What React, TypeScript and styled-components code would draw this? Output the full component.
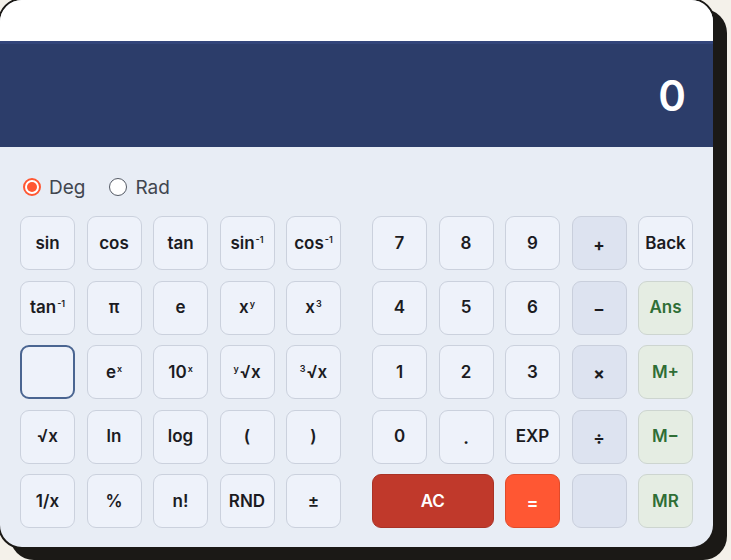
import React from 'react'
import styled, { createGlobalStyle } from 'styled-components'

const GlobalStyle = createGlobalStyle`
  html, body {
    margin: 0;
    padding: 0;
    background: #f4f1ea;
    overflow: hidden;
  }
  body {
    font-family: Inter, "Noto Sans", sans-serif;
    width: 731px;
    height: 560px;
  }
`

const Card = styled.div`
  box-sizing: border-box;
  width: 717px;
  height: 551px;
  margin: -2px 0 0 -2px;
  border: 2px solid #1b1916;
  border-radius: 24px;
  box-shadow: 12px 11px 0 #1b1916;
  overflow: hidden;
  display: flex;
  flex-direction: column;
  background: #e8edf5;
`

const TopStrip = styled.div`
  height: 41px;
  background: #ffffff;
  flex-shrink: 0;
`

const Display = styled.div`
  box-sizing: border-box;
  height: 106px;
  flex-shrink: 0;
  background: #2c3d6a;
  border-top: 3px solid #33457a;
  display: flex;
  align-items: center;
  justify-content: flex-end;
  padding: 0 27px 0 0;
  color: #ffffff;
  font-size: 42px;
  font-weight: 600;
`

const Body = styled.div`
  flex: 1;
  padding: 28px 20px 0 20px;
  display: flex;
  flex-direction: column;
`

const ModeRow = styled.div`
  display: flex;
  align-items: center;
  height: 24px;
  gap: 24px;
  margin: 0 0 17px 3px;
`

const ModeOption = styled.label`
  display: flex;
  align-items: center;
  gap: 8px;
  font-size: 19px;
  color: #41464f;
  font-weight: 400;
`

const RadioDot = styled.span<{ $checked?: boolean }>`
  box-sizing: border-box;
  width: 18px;
  height: 18px;
  border-radius: 50%;
  border: ${(p) => (p.$checked ? '2px solid #ff5733' : '1.5px solid #555b66')};
  background: #ffffff;
  display: flex;
  align-items: center;
  justify-content: center;
  &::after {
    content: '';
    width: 10px;
    height: 10px;
    border-radius: 50%;
    background: ${(p) => (p.$checked ? '#ff5733' : 'transparent')};
  }
`

const Keypad = styled.div`
  display: flex;
  gap: 31px;
`

const KeyGrid = styled.div`
  display: grid;
  grid-template-columns: repeat(5, 55px);
  grid-auto-rows: 54px;
  column-gap: 11.5px;
  row-gap: 10.5px;
`

type Tone = 'plain' | 'op' | 'mem' | 'clear' | 'equal' | 'focus'

const tones: Record<Tone, { bg: string; border: string; color: string }> = {
  plain: { bg: '#eef2fa', border: '#cbd1dd', color: '#1b1b1f' },
  op: { bg: '#dde3f0', border: '#c9cfdc', color: '#1b1b1f' },
  mem: { bg: '#e5ede3', border: '#cdd5d0', color: '#2f6e36' },
  clear: { bg: '#c0392b', border: '#a93226', color: '#ffffff' },
  equal: { bg: '#ff5733', border: '#e04a2a', color: '#ffffff' },
  focus: { bg: '#eef2fa', border: '#4a6591', color: '#1b1b1f' },
}

const Key = styled.button<{ $tone?: Tone; $span?: number }>`
  box-sizing: border-box;
  margin: 0;
  padding: 0;
  grid-column: span ${(p) => p.$span ?? 1};
  background: ${(p) => tones[p.$tone ?? 'plain'].bg};
  border: ${(p) => (p.$tone === 'focus' ? '2px' : '1.5px')} solid
    ${(p) => tones[p.$tone ?? 'plain'].border};
  border-radius: 9px;
  color: ${(p) => tones[p.$tone ?? 'plain'].color};
  font-family: Inter, "Noto Sans", sans-serif;
  font-size: 17px;
  font-weight: 600;
  display: flex;
  align-items: center;
  justify-content: center;
  line-height: 1;

  sup {
    font-size: 9px;
    margin-left: 1px;
    position: relative;
    top: -4px;
  }
`

const Pre = styled.sup`
  && {
    margin: 0 1px 0 0;
  }
`

const SmallOp = styled.span`
  font-size: 17px;
  font-weight: 700;
  padding-top: 4px;
`

const leftKeys: { label: React.ReactNode; tone?: Tone }[] = [
  { label: 'sin' },
  { label: 'cos' },
  { label: 'tan' },
  { label: <>sin<sup>-1</sup></> },
  { label: <>cos<sup>-1</sup></> },
  { label: <>tan<sup>-1</sup></> },
  { label: 'π' },
  { label: 'e' },
  { label: <>x<sup>y</sup></> },
  { label: <>x<sup>3</sup></> },
  { label: '', tone: 'focus' },
  { label: <>e<sup>x</sup></> },
  { label: <>10<sup>x</sup></> },
  { label: <><Pre>y</Pre>√x</> },
  { label: <><Pre>3</Pre>√x</> },
  { label: '√x' },
  { label: 'ln' },
  { label: 'log' },
  { label: '(' },
  { label: ')' },
  { label: '1/x' },
  { label: '%' },
  { label: 'n!' },
  { label: 'RND' },
  { label: '±' },
]

const rightKeys: { label: React.ReactNode; tone?: Tone; span?: number }[] = [
  { label: '7' },
  { label: '8' },
  { label: '9' },
  { label: <SmallOp>+</SmallOp>, tone: 'op' },
  { label: 'Back' },
  { label: '4' },
  { label: '5' },
  { label: '6' },
  { label: <SmallOp>–</SmallOp>, tone: 'op' },
  { label: 'Ans', tone: 'mem' },
  { label: '1' },
  { label: '2' },
  { label: '3' },
  { label: <SmallOp>×</SmallOp>, tone: 'op' },
  { label: 'M+', tone: 'mem' },
  { label: '0' },
  { label: <SmallOp>.</SmallOp> },
  { label: 'EXP' },
  { label: <SmallOp>÷</SmallOp>, tone: 'op' },
  { label: 'M−', tone: 'mem' },
  { label: 'AC', tone: 'clear', span: 2 },
  { label: <SmallOp>=</SmallOp>, tone: 'equal' },
  { label: '', tone: 'op' },
  { label: 'MR', tone: 'mem' },
]

export default function App() {
  return (
    <>
      <GlobalStyle />
      <Card>
        <TopStrip />
        <Display>0</Display>
        <Body>
          <ModeRow>
            <ModeOption>
              <RadioDot $checked />
              Deg
            </ModeOption>
            <ModeOption>
              <RadioDot />
              Rad
            </ModeOption>
          </ModeRow>
          <Keypad>
            <KeyGrid>
              {leftKeys.map((k, i) => (
                <Key key={i} $tone={k.tone}>
                  {k.label}
                </Key>
              ))}
            </KeyGrid>
            <KeyGrid>
              {rightKeys.map((k, i) => (
                <Key key={i} $tone={k.tone} $span={k.span}>
                  {k.label}
                </Key>
              ))}
            </KeyGrid>
          </Keypad>
        </Body>
      </Card>
    </>
  )
}
